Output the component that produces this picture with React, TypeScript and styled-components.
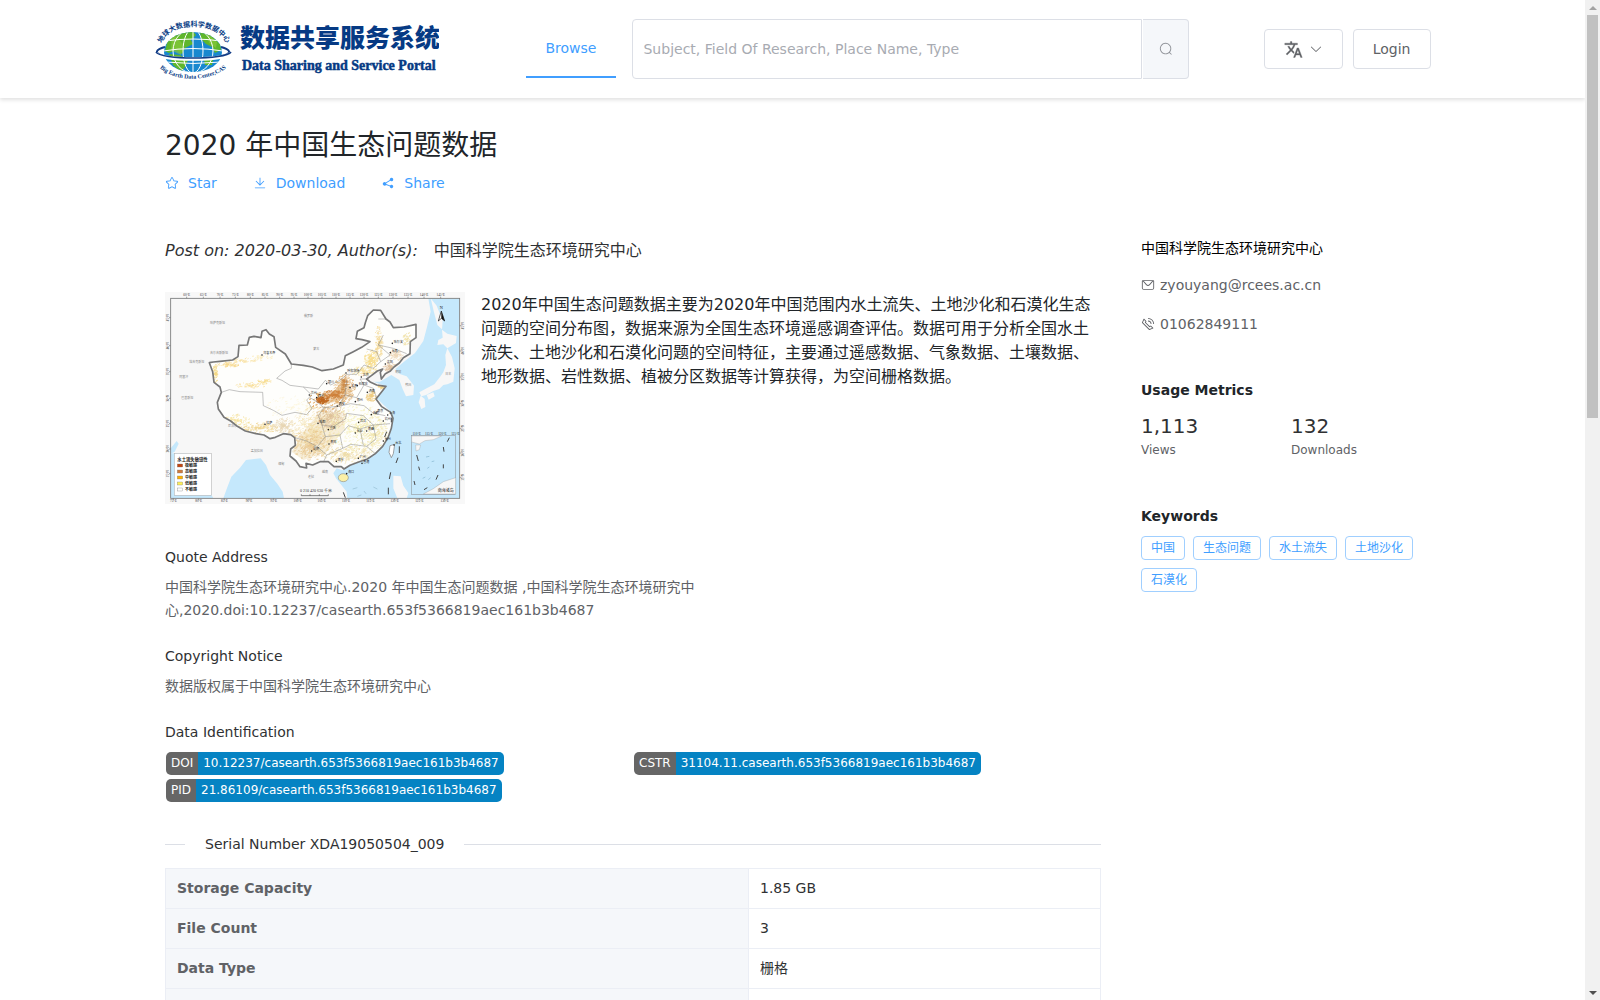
import React from 'react';
import styled, { createGlobalStyle } from 'styled-components';

const GlobalStyle = createGlobalStyle`
  *, *::before, *::after { box-sizing: border-box; }
  body {
    margin: 0;
    background: #fff;
    color: #303133;
    font-family: "DejaVu Sans", "Noto Sans CJK SC", sans-serif;
    font-size: 14px;
    line-height: 24px;
  }
  h1, h2, h3, p, dl, dd, ul { margin: 0; padding: 0; font-weight: 400; }
  button, input { font: inherit; }
  a { color: inherit; text-decoration: none; }
`;

const Shell = styled.div`
  display: grid;
  grid-template-columns: minmax(0, 1fr) 15px;
  height: 100vh;
`;

const Page = styled.div`
  overflow-y: auto;
  scrollbar-width: none;
`;

const ScrollTrack = styled.div`
  display: flex;
  flex-direction: column;
  align-items: center;
  background: #f1f1f1;
`;

const ScrollThumb = styled.div`
  width: 11px;
  flex: 0 0 40.3%;
  background: #c1c1c1;
`;

const ScrollArrow = styled.div<{ $down?: boolean }>`
  display: grid;
  place-items: center;
  height: 15px;
  margin-top: ${(p) => (p.$down ? 'auto' : '0')};
  &::before {
    content: '';
    border: 4px solid transparent;
    ${(p) =>
      p.$down
        ? 'border-top-color: #505050; border-bottom-width: 0;'
        : 'border-bottom-color: #a3a3a3; border-top-width: 0;'}
  }
`;

const Header = styled.header`
  height: 98px;
  box-shadow: 0 2px 4px rgba(0, 0, 0, 0.12);
`;

const HeaderInner = styled.div`
  display: flex;
  align-items: center;
  max-width: 1296px;
  height: 100%;
  margin: 0 auto;
  padding: 0 10px;
`;

const LogoLink = styled.a`
  display: block;
  width: 284px;
  height: 64px;
  margin-right: 87px;
  svg { display: block; }
`;

const NavLink = styled.a`
  height: 58px;
  margin-right: 16px;
  padding: 0 20px;
  border-bottom: 2px solid #409eff;
  color: #409eff;
  line-height: 56px;
`;

const SearchForm = styled.form`
  display: flex;
  flex: 0 1 557px;
  height: 60px;
`;

const SearchInput = styled.input`
  flex: 1;
  min-width: 0;
  padding: 0 10px;
  border: 1px solid #dcdfe6;
  border-radius: 4px 0 0 4px;
  outline: none;
  background: #fff;
  color: #606266;
  &::placeholder { color: #a8abb2; opacity: 1; }
`;

const SearchButton = styled.button`
  display: grid;
  place-items: center;
  width: 46px;
  margin-left: 1px;
  border: 1px solid #dcdfe6;
  border-left: 0;
  border-radius: 0 4px 4px 0;
  background: #f5f7fa;
  color: #909399;
`;

const HeaderActions = styled.div`
  display: flex;
  gap: 10px;
  margin-left: auto;
`;

const HeaderButton = styled.button`
  display: flex;
  align-items: center;
  gap: 6px;
  height: 40px;
  padding: 0 19px;
  border: 1px solid #dcdfe6;
  border-radius: 4px;
  background: #fff;
  color: #606266;
`;

const Main = styled.main`
  max-width: 1255px;
  margin: 0 auto;
  padding-top: 29px;
`;

const Title = styled.h1`
  color: #212529;
  font-size: 28px;
  line-height: 38px;
`;

const ActionBar = styled.div`
  display: flex;
  gap: 36px;
  margin-top: 6px;
`;

const ActionButton = styled.button`
  display: flex;
  align-items: center;
  gap: 9px;
  padding: 0;
  border: 0;
  background: none;
  color: #409eff;
  line-height: 24px;
`;

const Columns = styled.div`
  display: grid;
  grid-template-columns: minmax(0, 1fr) 279px;
  gap: 40px;
  margin-top: 43px;
`;

const Byline = styled.p`
  display: flex;
  gap: 16px;
  padding-top: 1px;
  font-size: 16px;
  line-height: 24px;
`;

const Summary = styled.div`
  display: grid;
  grid-template-columns: 300px minmax(0, 1fr);
  gap: 16px;
  margin-top: 29px;
  svg { display: block; width: 300px; height: 212px; }
`;

const Abstract = styled.p`
  padding-top: 1px;
  color: #212529;
  font-size: 16px;
  line-height: 24px;
`;

const Sections = styled.div`
  display: flex;
  flex-direction: column;
  gap: 22px;
  margin-top: 41px;
`;

const SectionTitle = styled.h2`
  margin-bottom: 7px;
  font-size: 14px;
  line-height: 24px;
`;

const SectionText = styled.p`
  max-width: 540px;
  color: #606266;
  line-height: 23px;
`;

const BadgeGrid = styled.div`
  display: grid;
  grid-template-columns: 1fr 1fr;
  gap: 4px 0;
  padding-top: 1px;
`;

const Badge = styled.a`
  display: flex;
  justify-self: start;
  height: 23px;
  margin-left: 1px;
  overflow: hidden;
  border-radius: 5px;
  color: #fff;
  font-size: 12px;
  line-height: 23px;
`;

const BadgeName = styled.span`
  padding: 0 5px;
  background: #666;
`;

const BadgeValue = styled.span`
  padding: 0 5px;
  background: #0583c3;
`;

const Divider = styled.h2`
  display: flex;
  align-items: center;
  gap: 20px;
  margin: 30px 0 12px;
  font-size: 14px;
  line-height: 24px;
  &::before, &::after {
    content: '';
    height: 1px;
    background: #dcdfe6;
  }
  &::before { width: 20px; }
  &::after { flex: 1; }
`;

const InfoTable = styled.table`
  width: 100%;
  border-collapse: collapse;
  th, td {
    height: 40px;
    padding: 0 11px;
    border: 1px solid #ebeef5;
    line-height: 23px;
    text-align: left;
  }
  th {
    width: 583px;
    background: #f5f7fa;
    color: #606266;
    font-weight: 700;
  }
`;

const Sidebar = styled.aside`
  color: #606266;
`;

const Institution = styled.p`
  color: #000;
  line-height: 20px;
`;

const Contact = styled.a`
  display: flex;
  align-items: center;
  gap: 5px;
  height: 24px;
  margin-top: 15px;
`;

const SideTitle = styled.h3`
  margin-top: 42px;
  color: #212529;
  font-size: 14px;
  font-weight: 700;
  line-height: 24px;
`;

const Metrics = styled.dl`
  display: grid;
  grid-template-columns: 150px 1fr;
  padding: 10px 0 2px;
`;

const Metric = styled.div`
  display: flex;
  flex-direction: column-reverse;
  dd { color: #303133; font-size: 20px; line-height: 28px; }
  dt { font-size: 12px; line-height: 20px; }
`;

const Tags = styled.ul`
  display: flex;
  flex-wrap: wrap;
  gap: 8px;
  margin-top: 8px;
  list-style: none;
`;

const Tag = styled.li`
  padding: 0 9px;
  border: 1px solid #a0cfff;
  border-radius: 4px;
  color: #409eff;
  font-size: 12px;
  line-height: 22px;
`;

const icons = {
  search: 'm795.904 750.72 124.992 124.928a32 32 0 0 1-45.248 45.248L750.656 795.904a416 416 0 1 1 45.248-45.248zM480 832a352 352 0 1 0 0-704 352 352 0 0 0 0 704z',
  arrow: 'M831.872 340.864 512 652.672 192.128 340.864a30.592 30.592 0 0 0-42.752 0 29.12 29.12 0 0 0 0 41.6L489.664 714.24a32 32 0 0 0 44.672 0l340.288-331.712a29.12 29.12 0 0 0 0-41.728 30.592 30.592 0 0 0-42.752 0z',
  star: 'm512 747.84 228.16 119.936a6.4 6.4 0 0 0 9.28-6.72l-43.52-254.08 184.512-179.904a6.4 6.4 0 0 0-3.52-10.88l-255.104-37.12L517.76 147.904a6.4 6.4 0 0 0-11.52 0L392.192 379.072l-255.104 37.12a6.4 6.4 0 0 0-3.52 10.88L318.08 606.976l-43.584 254.08a6.4 6.4 0 0 0 9.28 6.72L512 747.84zM313.6 924.48a70.4 70.4 0 0 1-102.144-74.24l37.888-220.928L88.96 472.96A70.4 70.4 0 0 1 128 352.896l221.76-32.256 99.2-200.96a70.4 70.4 0 0 1 126.208 0l99.2 200.96 221.824 32.256a70.4 70.4 0 0 1 39.04 120.064L774.72 629.376l37.888 220.928a70.4 70.4 0 0 1-102.144 74.24L512 820.096l-198.4 104.32z',
  download: 'M160 832h704a32 32 0 1 1 0 64H160a32 32 0 1 1 0-64zm384-253.696 236.288-236.352 45.248 45.248L508.8 704 192 387.2l45.248-45.248L480 584.704V128h64v450.304z',
  share: 'm679.872 348.8-301.76 188.608a127.808 127.808 0 0 1 5.12 52.16l279.936 104.96a128 128 0 1 1-22.464 59.904l-279.872-104.96a128 128 0 1 1-16.64-166.272l301.696-188.608a128 128 0 1 1 33.92 54.272z',
  message: 'M128 224v512a64 64 0 0 0 64 64h640a64 64 0 0 0 64-64V224H128zm0-64h768a64 64 0 0 1 64 64v512a128 128 0 0 1-128 128H192A128 128 0 0 1 64 736V224a64 64 0 0 1 64-64zM904 224 656.512 506.88a192 192 0 0 1-289.024 0L120 224h784zm-698.944 0 210.56 240.704a128 128 0 0 0 192.704 0L818.944 224H205.056z',
  phone: 'M79.36 432.256 591.744 944.64a32 32 0 0 0 35.2 6.784l253.44-108.544a32 32 0 0 0 9.984-52.032l-153.856-153.92a32 32 0 0 0-36.928-6.016l-69.888 34.944L358.08 394.24l35.008-69.888a32 32 0 0 0-5.952-36.928L233.152 133.568a32 32 0 0 0-52.032 10.048L72.512 397.056a32 32 0 0 0 6.784 35.2zm60.48-29.952 81.536-190.08L325.568 316.48l-24.64 49.216-20.608 41.216 32.576 32.64 271.552 271.552 32.64 32.64 41.216-20.672 49.28-24.576 104.192 104.128-190.08 81.472L139.84 402.304zM512 320v-64a256 256 0 0 1 256 256h-64a192 192 0 0 0-192-192zm0-192V64a448 448 0 0 1 448 448h-64a384 384 0 0 0-384-384z',
};

function Icon({ name, size = 14 }: { name: keyof typeof icons; size?: number }) {
  return (
    <svg width={size} height={size} viewBox="0 0 1024 1024" fill="currentColor" aria-hidden="true">
      <path d={icons[name]} />
    </svg>
  );
}

function TranslateIcon() {
  return (
    <svg width="19" height="19" viewBox="0 0 24 24" fill="currentColor" stroke="currentColor" strokeWidth=".4" aria-hidden="true">
      <path d="M12.87 15.07l-2.54-2.51.03-.03c1.74-1.94 2.98-4.17 3.71-6.53H17V4h-7V2H8v2H1v1.99h11.17C11.5 7.92 10.44 9.75 9 11.35 8.07 10.32 7.3 9.19 6.69 8h-2c.73 1.63 1.73 3.17 2.98 4.56l-5.09 5.02L4 19l5-5 3.11 3.11.76-2.04zM18.5 10h-2L12 22h2l1.12-3h4.75L21 22h2l-4.5-12zm-2.62 7l1.62-4.33L19.12 17h-3.24z" />
    </svg>
  );
}

function Logo() {
  return (
    <svg width="284" height="64" viewBox="0 0 284 64" role="img" aria-label="Data Sharing and Service Portal">
      <defs>
        <clipPath id="globe"><ellipse cx="38" cy="35" rx="29" ry="20" /></clipPath>
        <path id="arcTop" d="M7 26C15 4 62 4 71 26" />
        <path id="arcBottom" d="M6 52C22 65 52 65 70 52" />
      </defs>
      <path d="M10 30C-5 34 -1 41 38 42C77 41 81 34 66 30" fill="none" stroke="#123c86" strokeWidth="2" />
      <ellipse cx="38" cy="35" rx="29" ry="20" fill="#1888cf" />
      <g clipPath="url(#globe)">
        <path d="M10 34L13 22L24 14L37 13L41 18L36 23L38 27L30 31L27 37L21 33L14 36ZM45 15L56 18L65 27L66 33L60 36L57 30L51 27L46 22ZM14 37L25 38L33 43L30 50L26 55L18 48ZM49 43L58 43L57 48L50 48Z" fill="#5fb62c" />
        <path d="M17 16L28 27L26 38L16 33ZM52 16L62 25L61 31L54 26Z" fill="#8acb3a" opacity=".65" />
        <g fill="none" stroke="#fff" strokeWidth="1">
          <path d="M38 12V56M10 24Q38 20 66 24M8 34Q38 29 68 34M10 45Q38 48 66 45" />
          <ellipse cx="38" cy="34" rx="10" ry="22" />
          <ellipse cx="38" cy="34" rx="20" ry="22" />
        </g>
      </g>
      <path d="M1 36C5 44 71 44 76 36" fill="none" stroke="#fff" strokeWidth="3.5" />
      <path d="M1 35C5 43 71 43 76 35" fill="none" stroke="#123c86" strokeWidth="1.6" />
      <text fill="#063a84" fontFamily="Noto Sans CJK SC, sans-serif" fontWeight="700" fontSize="7">
        <textPath href="#arcTop" startOffset="50%" textAnchor="middle">地球大数据科学数据中心</textPath>
      </text>
      <text fill="#063a84" fontFamily="Liberation Serif, serif" fontWeight="700" fontSize="6">
        <textPath href="#arcBottom" startOffset="50%" textAnchor="middle">Big Earth Data Center,CAS</textPath>
      </text>
      <text x="85" y="30" fill="#063a84" fontFamily="Noto Sans CJK SC, sans-serif" fontWeight="900" fontSize="25">数据共享服务系统</text>
      <text x="87" y="53" fill="#063a84" stroke="#063a84" strokeWidth=".5" fontFamily="Liberation Serif, serif" fontWeight="700" fontSize="14">Data Sharing and Service Portal</text>
    </svg>
  );
}

/* Outline of the mapped territory, in map units. */
const territory =
  'M148 233L160 231L180 229L218 225L234 215L237 181L262 180L268 157L282 154L303 158L306 139L318 134L328 147L342 155L347 187L376 207L394 237L430 241L457 246L486 257L520 252L550 240L556 212L580 200L605 187L630 170L606 164L588 161L592 139L612 128L616 113L623 92L640 75L662 76L678 102L690 111L700 128L732 126L768 118L768 158L751 170L750 206L730 218L718 234L702 246L690 259L676 266L664 282L661 262L668 252L652 258L634 272L620 282L632 292L650 300L678 304L664 322L648 342L665 365L692 382L699 400L694 430L684 458L668 484L646 506L622 522L596 531L570 541L552 552L544 545L522 545L505 530L480 530L458 540L438 535L440 549L420 545L408 528L390 513L392 492L406 481L404 458L392 449L370 446L346 457L330 461L312 450L288 446L256 438L232 424L212 408L192 397L175 372L172 352L184 322L180 306L162 292L158 260Z';

/* Density clusters: x, y, spread x, spread y, dots, colour. */
const clusters: [number, number, number, number, number, string][] = [
  [200, 240, 40, 8, 80, '#f8da8f'],
  [240, 228, 48, 7, 50, '#f9e3a5'],
  [164, 268, 8, 32, 65, '#f5d987'],
  [300, 218, 36, 9, 30, '#fbebb8'],
  [270, 302, 46, 8, 60, '#f9e09a'],
  [312, 290, 20, 7, 40, '#f8dc8e'],
  [228, 408, 40, 18, 100, '#f6e29b'],
  [300, 430, 52, 15, 140, '#f0d590'],
  [370, 424, 34, 24, 160, '#e9d6b4'],
  [460, 440, 75, 75, 620, '#f3e0ac'],
  [450, 480, 55, 48, 320, '#e9c78f'],
  [510, 395, 45, 38, 320, '#dfc19a'],
  [500, 350, 62, 30, 300, '#e6b67a'],
  [550, 315, 32, 48, 300, '#e1b478'],
  [520, 330, 34, 14, 150, '#cf813a'],
  [485, 347, 18, 11, 130, '#c0661f'],
  [550, 298, 10, 24, 70, '#cc8a47'],
  [590, 430, 85, 75, 420, '#f6eeb4'],
  [640, 450, 45, 55, 240, '#f2e6ac'],
  [560, 510, 75, 26, 260, '#eedca6'],
  [632, 335, 18, 15, 90, '#efcb82'],
  [665, 306, 14, 7, 45, '#f0cf7d'],
  [632, 225, 22, 30, 170, '#f8dc8a'],
  [654, 175, 12, 52, 140, '#f4d995'],
  [705, 212, 20, 18, 90, '#eed8b8'],
  [688, 248, 20, 14, 90, '#e0bf9b'],
  [740, 165, 14, 22, 50, '#f0dfa0'],
  [610, 260, 42, 14, 110, '#f6df98'],
  [395, 370, 85, 34, 90, '#fcf4d8'],
];

function makeDots(cx: number, cy: number, rx: number, ry: number, count: number, seed: number) {
  let state = seed * 7919 + 17;
  const next = () => {
    state = (state * 1103515245 + 12345) % 2147483648;
    return state / 2147483648;
  };
  let d = '';
  for (let i = 0; i < count; i += 1) {
    const angle = next() * Math.PI * 2;
    const radius = Math.pow(next(), 0.8);
    const x = Math.round(cx + Math.cos(angle) * radius * rx);
    const y = Math.round(cy + Math.sin(angle) * radius * ry);
    const length = 2 + Math.round(next() * 5);
    d += `M${x} ${y}l${length} ${-Math.round(next() * 4)}`;
  }
  return d;
}

const cities: [number, number, string][] = [
  [306, 210, '乌鲁木齐'], [470, 338, '西宁'], [448, 330, '兰州'], [500, 296, '银川'], [558, 264, '呼和浩特'],
  [604, 276, '北京'], [592, 302, '石家庄'], [570, 308, '太原'], [622, 322, '济南'], [697, 175, '哈尔滨'],
  [691, 203, '长春'], [676, 237, '沈阳'], [532, 363, '西安'], [586, 350, '郑州'], [634, 389, '合肥'],
  [648, 384, '南京'], [683, 390, '上海'], [670, 408, '杭州'], [596, 412, '武汉'], [474, 415, '成都'],
  [505, 434, '重庆'], [586, 444, '长沙'], [620, 438, '南昌'], [507, 477, '贵阳'], [455, 498, '昆明'],
  [529, 529, '南宁'], [595, 520, '广州'], [606, 535, '香港'], [670, 468, '福州'], [702, 480, '台北'],
  [315, 418, '拉萨'], [560, 566, '海口'],
];

const neighbours: [number, number, string][] = [
  [150, 116, '哈萨克斯坦'], [432, 96, '俄罗斯'], [460, 196, '蒙古'], [150, 208, '吉尔吉斯斯坦'],
  [88, 235, '塔吉克斯坦'], [58, 278, '阿富汗'], [64, 342, '巴基斯坦'], [204, 425, '尼泊尔'],
  [272, 502, '孟加拉国'], [355, 540, '缅甸'], [444, 578, '老挝'], [486, 563, '越南'],
  [706, 263, '朝鲜'], [736, 303, '韩国'], [856, 271, '日本'],
];

const legend: [string, string][] = [
  ['#c3440d', '极敏感'], ['#d17a3b', '高敏感'], ['#ffb000', '中敏感'], ['#fff05a', '低敏感'], ['#fff', '不敏感'],
];

function ChinaMap() {
  const topTicks = [80, 130, 180, 226, 271, 315, 359, 402, 444, 486, 528, 570, 612, 655, 699, 744, 792, 842];
  const bottomTicks = [40, 116, 193, 267, 341, 413, 485, 558, 631, 704, 778, 854];
  const leftTicks = [98, 182, 260, 340, 416, 492, 566];
  const rightTicks = [122, 198, 276, 355, 430, 504, 577];
  return (
    <svg viewBox="15 21 900 636" role="img" aria-label="水土流失敏感性">
      <defs>
        <clipPath id="land"><path d={territory} /></clipPath>
        <clipPath id="frame"><rect x="32" y="40" width="867" height="600" /></clipPath>
      </defs>
      <rect x="15" y="21" width="900" height="636" fill="#f8f8f8" />
      <g clipPath="url(#frame)">
        <rect x="32" y="40" width="867" height="600" fill="#c5e8fc" />
        <path
          fill="#f7f7f7"
          d="M32 40H805L812 80L800 130L790 168L765 204L730 232L706 252L717 266L740 274L762 302L760 330L738 334L728 312L718 285L694 270L660 290L640 290L678 304L650 340L694 382L690 440L665 490L622 522L570 540L548 556L530 550L520 565L528 580L560 620L562 640H372L368 620L352 596L330 570L318 540L302 520L258 525L240 548L214 575L200 612L190 640H32L40 610L32 590Z"
        />
        <path fill="#c5e8fc" d="M32 490L50 468L56 476L44 500L32 506Z" />
        <path fill="#c5e8fc" d="M32 632H160L140 600L150 560H32Z" opacity=".01" />
        <path fill="#f7f7f7" d="M812 40L830 62L848 108L846 133L832 120L822 82ZM846 134L862 146L890 153L888 174L862 190L850 178L832 180L835 165L848 158ZM862 190L876 216L884 250L880 290L862 298L850 300L838 312L820 318L798 330L784 334L778 322L800 310L823 298L840 276L850 262L858 240L856 210ZM782 332L794 342L796 366L784 372L776 352ZM800 330L820 322L824 334L806 344ZM700 572L722 574L730 602L745 624L740 640H712L700 610Z" />
        <path d={territory} fill="#fefefc" />
        <g clipPath="url(#land)" fill="none" strokeWidth="2">
          <path d="M555 280L520 320L465 340L480 358L520 352L555 335Z" fill="#e2b27c" stroke="none" opacity=".6" />
          <path d="M480 380L545 385L555 430L500 500L430 525L395 500L430 440Z" fill="#f1e3c2" stroke="none" opacity=".6" />
          {clusters.map(([x, y, rx, ry, count, color], i) => (
            <path key={i} d={makeDots(x, y, rx, ry, count, i + 1)} stroke={color} />
          ))}
        </g>
        <path
          fill="none" stroke="#888" strokeWidth="1.5"
          d="M184 322L208 314L240 320L308 322L310 362L340 376L366 391L405 382L440 389L456 370L440 345L455 330L430 306L390 301L366 286L350 280L375 258L394 250V237M430 306L475 312L496 286L512 300L540 286L560 268L590 268L612 240L640 250L662 230L650 200L620 192M560 285L555 330L590 338L612 300L600 282L620 282M612 300L640 310L650 340M555 330L535 364L492 368L470 350L450 338M535 364L572 356L612 362L640 385L676 392M492 368L475 392L486 420L520 425L556 402L560 385L610 392L640 420L690 416M486 420L496 455L540 450L565 422L600 432L640 420M404 458L440 468L472 485L496 455M472 485L500 510L548 490L540 450M548 490L572 478L620 484L646 506M600 432L610 480M640 420L648 462L620 484M500 510L490 532M655 102L678 102M655 180L700 190L740 206M662 230L690 210L655 180L670 150"
        />
        <path d={territory} fill="none" stroke="#777" strokeWidth="5" strokeLinejoin="round" />
        <ellipse cx="550" cy="578" rx="15" ry="12" fill="#fbf0a8" stroke="#777" strokeWidth="1.5" />
        <path d="M690 482L704 478L700 506L694 518L687 502Z" fill="#fff" stroke="#777" strokeWidth="2" />
        <path d="M718 484V504M714 518L708 534M692 562L688 582M685 608V628M550 622L556 638M694 398V412M680 440L674 456" stroke="#444" strokeWidth="3" />
        <path d="M578 612L592 608M612 618L618 626M640 606L652 612M592 634L604 630" stroke="#96bcd0" strokeWidth="2" />
        <g fontFamily="Noto Sans CJK SC, sans-serif" fontSize="9">
          <g fill="#888">
            {neighbours.map(([x, y, name]) => <text key={name} x={x} y={y}>{name}</text>)}
          </g>
          <g fill="#222">
            {cities.map(([x, y, name]) => (
              <g key={name}>
                <circle cx={x} cy={y} r="2.4" />
                <text x={x + 4} y={y - 2}>{name}</text>
              </g>
            ))}
          </g>
        </g>
        <path d="M844 78L835 108L844 100L854 108Z" fill="#fff" stroke="#111" strokeWidth="2" />
        <path d="M844 78L854 108L844 100Z" fill="#111" />
        <text x="839" y="73" fontFamily="Liberation Serif, serif" fontSize="13" fill="#111">N</text>
        <rect x="754" y="452" width="133" height="176" fill="#c5e8fc" stroke="#888" strokeWidth="1.5" />
        <path d="M755 453H845L820 464L795 467L778 477L755 471ZM887 578V627H790L820 611L850 590ZM767 480L782 480L778 494L768 498Z" fill="#f7f7f7" stroke="#999" />
        <path d="M868 458L862 470M850 486L852 500M850 538V550M834 570L828 584M802 608L792 614M762 588L765 600M776 545L779 556M770 510L775 528" stroke="#444" strokeWidth="3" />
        <path d="M798 516L808 514M815 530L823 528M788 580L796 576M805 584L812 578M802 550L808 546" stroke="#83b3cd" strokeWidth="2" />
        <text x="833" y="622" fontFamily="Noto Sans CJK SC, sans-serif" fontSize="12" fill="#222">南海诸岛</text>
        <path d="M424 628V632H505V628M450 628V632M478 628V632" stroke="#444" strokeWidth="2" fill="none" />
        <text x="420" y="622" fontFamily="Liberation Serif, serif" fontSize="12" fill="#333">0 210 420 630 千米</text>
        <path d="M32 505H80L112 560L140 604L160 640H32Z" fill="#c5e8fc" />
        <rect x="43" y="505" width="111" height="126" fill="#fff" stroke="#aaa" strokeWidth="1.5" />
        <g fontFamily="Noto Sans CJK SC, sans-serif" fontWeight="700" fill="#222">
          <text x="52" y="528" fontSize="13">水土流失敏感性</text>
          {legend.map(([color, label], i) => (
            <g key={label}>
              <rect x="52" y={537 + i * 18} width="16" height="9" fill={color} stroke="#777" />
              <text x="75" y={546 + i * 18} fontSize="12">{label}</text>
            </g>
          ))}
        </g>
      </g>
      <rect x="32" y="40" width="867" height="600" fill="none" stroke="#777" strokeWidth="2.5" />
      <g fontFamily="Liberation Serif, serif" fontSize="10" fill="#333" textAnchor="middle">
        {topTicks.map((x, i) => <text key={x} x={x} y="33">{`${60 + i * 5}°E`}</text>)}
        {bottomTicks.map((x, i) => <text key={x} x={x} y="652">{`${75 + i * 5}°E`}</text>)}
        {leftTicks.map((y, i) => <text key={y} transform={`translate(26 ${y}) rotate(-90)`}>{`${45 - i * 5}°N`}</text>)}
        {rightTicks.map((y, i) => <text key={y} transform={`translate(912 ${y}) rotate(-90)`}>{`${45 - i * 5}°N`}</text>)}
        {[770, 807, 847, 886].map((x, i) => <text key={x} x={x} y="450">{`${110 + i * 5}°E`}</text>)}
      </g>
      <path
        stroke="#777" strokeWidth="2"
        d={[
          ...topTicks.map((x) => `M${x} 35V40`),
          ...bottomTicks.map((x) => `M${x} 640V645`),
          ...leftTicks.map((y) => `M27 ${y}H32`),
          ...rightTicks.map((y) => `M899 ${y}H904`),
        ].join('')}
      />
    </svg>
  );
}

const badges = [
  ['DOI', '10.12237/casearth.653f5366819aec161b3b4687'],
  ['CSTR', '31104.11.casearth.653f5366819aec161b3b4687'],
  ['PID', '21.86109/casearth.653f5366819aec161b3b4687'],
];

const facts = [
  ['Storage Capacity', '1.85 GB'],
  ['File Count', '3'],
  ['Data Type', '栅格'],
  ['', ''],
];

const keywords = ['中国', '生态问题', '水土流失', '土地沙化', '石漠化'];

export default function App() {
  return (
    <>
      <GlobalStyle />
      <Shell>
        <Page>
          <Header>
            <HeaderInner>
              <LogoLink href="#"><Logo /></LogoLink>
              <NavLink href="#">Browse</NavLink>
              <SearchForm onSubmit={(e) => e.preventDefault()}>
                <SearchInput aria-label="Search" placeholder="Subject, Field Of Research, Place Name, Type" />
                <SearchButton type="submit" aria-label="Submit search"><Icon name="search" /></SearchButton>
              </SearchForm>
              <HeaderActions>
                <HeaderButton type="button" aria-label="Language">
                  <TranslateIcon />
                  <Icon name="arrow" />
                </HeaderButton>
                <HeaderButton type="button">Login</HeaderButton>
              </HeaderActions>
            </HeaderInner>
          </Header>
          <Main>
            <Title>2020 年中国生态问题数据</Title>
            <ActionBar>
              <ActionButton type="button"><Icon name="star" />Star</ActionButton>
              <ActionButton type="button"><Icon name="download" />Download</ActionButton>
              <ActionButton type="button"><Icon name="share" />Share</ActionButton>
            </ActionBar>
            <Columns>
              <article>
                <Byline>
                  <em>Post on: 2020-03-30, Author(s):</em>
                  <span>中国科学院生态环境研究中心</span>
                </Byline>
                <Summary>
                  <ChinaMap />
                  <Abstract>
                    2020年中国生态问题数据主要为2020年中国范围内水土流失、土地沙化和石漠化生态问题的空间分布图，数据来源为全国生态环境遥感调查评估。数据可用于分析全国水土流失、土地沙化和石漠化问题的空间特征，主要通过遥感数据、气象数据、土壤数据、地形数据、岩性数据、植被分区数据等计算获得，为空间栅格数据。
                  </Abstract>
                </Summary>
                <Sections>
                  <section>
                    <SectionTitle>Quote Address</SectionTitle>
                    <SectionText>
                      中国科学院生态环境研究中心.2020 年中国生态问题数据 ,中国科学院生态环境研究中心,2020.doi:10.12237/casearth.653f5366819aec161b3b4687
                    </SectionText>
                  </section>
                  <section>
                    <SectionTitle>Copyright Notice</SectionTitle>
                    <SectionText>数据版权属于中国科学院生态环境研究中心</SectionText>
                  </section>
                  <section>
                    <SectionTitle>Data Identification</SectionTitle>
                    <BadgeGrid>
                      {badges.map(([name, value]) => (
                        <Badge key={name} href="#">
                          <BadgeName>{name}</BadgeName>
                          <BadgeValue>{value}</BadgeValue>
                        </Badge>
                      ))}
                    </BadgeGrid>
                  </section>
                </Sections>
                <Divider>Serial Number XDA19050504_009</Divider>
                <InfoTable>
                  <tbody>
                    {facts.map(([name, value], i) => (
                      <tr key={i}>
                        <th scope="row">{name}</th>
                        <td>{value}</td>
                      </tr>
                    ))}
                  </tbody>
                </InfoTable>
              </article>
              <Sidebar>
                <Institution>中国科学院生态环境研究中心</Institution>
                <Contact href="#"><Icon name="message" />zyouyang@rcees.ac.cn</Contact>
                <Contact href="#"><Icon name="phone" />01062849111</Contact>
                <SideTitle>Usage Metrics</SideTitle>
                <Metrics>
                  <Metric><dt>Views</dt><dd>1,113</dd></Metric>
                  <Metric><dt>Downloads</dt><dd>132</dd></Metric>
                </Metrics>
                <SideTitle>Keywords</SideTitle>
                <Tags>
                  {keywords.map((word) => <Tag key={word}>{word}</Tag>)}
                </Tags>
              </Sidebar>
            </Columns>
          </Main>
        </Page>
        <ScrollTrack aria-hidden="true">
          <ScrollArrow />
          <ScrollThumb />
          <ScrollArrow $down />
        </ScrollTrack>
      </Shell>
    </>
  );
}
